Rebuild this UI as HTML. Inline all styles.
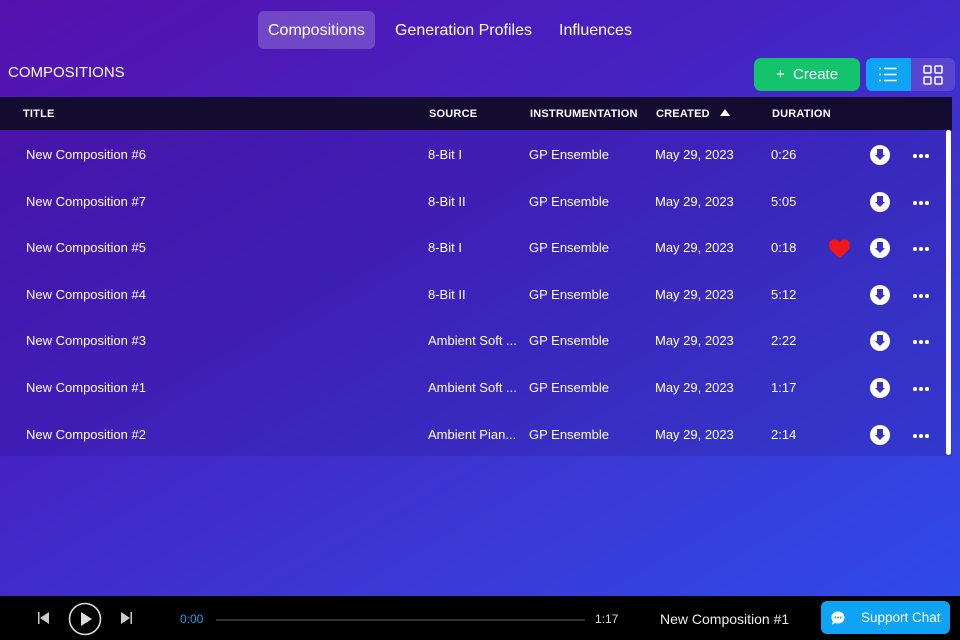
<!DOCTYPE html>
<html><head><style>
*{margin:0;padding:0;box-sizing:border-box}
body{width:960px;height:640px;overflow:hidden;font-family:"Liberation Sans",sans-serif;color:#fff;position:relative;background:linear-gradient(150deg,#5511ae 0%,#4424c4 40%,#3a3ad6 70%,#2d4ced 100%)}
.abs{position:absolute}
.tab{position:absolute;top:11px;height:38px;line-height:40px;font-size:16px;padding:0 10px}
.hdr{position:absolute;top:97px;left:0;width:952px;height:33px;background:#130c30;font-size:11px;font-weight:bold;letter-spacing:.2px}
.hdr span{position:absolute;top:11px}
.body{position:absolute;top:130px;left:0;width:952px;height:326px;background:rgba(40,10,120,.18)}
.row{position:absolute;left:0;width:952px;height:20px;font-size:13px}
.row span{position:absolute;top:1px}
.dl{position:absolute;left:870px;top:-1px;width:20px;height:20px;border-radius:50%;background:#fff}
.dl:after{content:"";position:absolute;left:7px;top:4px;width:6px;height:6px;background:#3a2fc0}
.dl:before{content:"";position:absolute;left:5px;top:10px;border-left:5px solid transparent;border-right:5px solid transparent;border-top:5px solid #3a2fc0}
.dots{position:absolute;left:913px;top:8px}
.dots i{display:inline-block;width:3.6px;height:3.6px;border-radius:50%;background:#fff;margin-right:2.6px;float:left}
</style></head><body>
<div class="tab" style="left:258px;background:rgba(255,255,255,.2);border-radius:6px">Compositions</div>
<div class="tab" style="left:385px">Generation Profiles</div>
<div class="tab" style="left:549px">Influences</div>
<div class="abs" style="left:8px;top:64px;font-size:15px">COMPOSITIONS</div>
<div class="abs" style="left:754px;top:58px;width:106px;height:33px;background:#14c46c;border-radius:7px;font-size:15px;line-height:33px;text-align:center">+&nbsp;&nbsp;Create</div>
<div class="abs" style="left:866px;top:58px;width:89px;height:33px;background:#5a45d0;border-radius:6px;overflow:hidden">
 <div style="width:45px;height:33px;background:#0fa3f5;position:relative">
  <svg width="45" height="33"><g stroke="#fff" stroke-width="1.6"><line x1="13" y1="10.5" x2="15" y2="10.5"/><line x1="18" y1="10.5" x2="31" y2="10.5"/><line x1="13" y1="16.5" x2="15" y2="16.5"/><line x1="18" y1="16.5" x2="31" y2="16.5"/><line x1="13" y1="22.5" x2="15" y2="22.5"/><line x1="18" y1="22.5" x2="31" y2="22.5"/></g></svg>
 </div>
 <svg class="abs" style="left:45px;top:0" width="44" height="33"><g fill="none" stroke="#fff" stroke-width="1.5"><rect x="13" y="8" width="7" height="7" rx="1"/><rect x="24" y="8" width="7" height="7" rx="1"/><rect x="13" y="19" width="7" height="7" rx="1"/><rect x="24" y="19" width="7" height="7" rx="1"/></g></svg>
</div>
<div class="hdr"><span style="left:23px">TITLE</span><span style="left:429px">SOURCE</span><span style="left:530px">INSTRUMENTATION</span><span style="left:656px">CREATED&nbsp;&nbsp;&nbsp;<b style="display:inline-block;border-left:5px solid transparent;border-right:5px solid transparent;border-bottom:7px solid #fff;vertical-align:1px"></b></span><span style="left:772px">DURATION</span></div>
<div class="body"></div>
<div class="abs" style="left:946px;top:130px;width:5px;height:325px;background:#fff;border-radius:3px"></div>
<div class="row" style="top:146px"><span style="left:26px">New Composition #6</span><span style="left:428px">8-Bit I</span><span style="left:529px">GP Ensemble</span><span style="left:655px">May 29, 2023</span><span style="left:771px">0:26</span><div class="dl"></div><div class="dots"><i></i><i></i><i></i></div></div>
<div class="row" style="top:193px"><span style="left:26px">New Composition #7</span><span style="left:428px">8-Bit II</span><span style="left:529px">GP Ensemble</span><span style="left:655px">May 29, 2023</span><span style="left:771px">5:05</span><div class="dl"></div><div class="dots"><i></i><i></i><i></i></div></div>
<div class="row" style="top:239px"><span style="left:26px">New Composition #5</span><span style="left:428px">8-Bit I</span><span style="left:529px">GP Ensemble</span><span style="left:655px">May 29, 2023</span><span style="left:771px">0:18</span>
<svg class="abs" style="left:828px;top:0" width="23" height="20"><path d="M11.5 19 C4 13 1 10 1 6 C1 2.5 3.5 0.5 6.5 0.5 C9 0.5 10.5 2 11.5 3.5 C12.5 2 14 0.5 16.5 0.5 C19.5 0.5 22 2.5 22 6 C22 10 19 13 11.5 19Z" fill="#f01818"/></svg>
<div class="dl"></div><div class="dots"><i></i><i></i><i></i></div></div>
<div class="row" style="top:286px"><span style="left:26px">New Composition #4</span><span style="left:428px">8-Bit II</span><span style="left:529px">GP Ensemble</span><span style="left:655px">May 29, 2023</span><span style="left:771px">5:12</span><div class="dl"></div><div class="dots"><i></i><i></i><i></i></div></div>
<div class="row" style="top:332px"><span style="left:26px">New Composition #3</span><span style="left:428px">Ambient Soft ...</span><span style="left:529px">GP Ensemble</span><span style="left:655px">May 29, 2023</span><span style="left:771px">2:22</span><div class="dl"></div><div class="dots"><i></i><i></i><i></i></div></div>
<div class="row" style="top:379px"><span style="left:26px">New Composition #1</span><span style="left:428px">Ambient Soft ...</span><span style="left:529px">GP Ensemble</span><span style="left:655px">May 29, 2023</span><span style="left:771px">1:17</span><div class="dl"></div><div class="dots"><i></i><i></i><i></i></div></div>
<div class="row" style="top:426px"><span style="left:26px">New Composition #2</span><span style="left:428px">Ambient Pian...</span><span style="left:529px">GP Ensemble</span><span style="left:655px">May 29, 2023</span><span style="left:771px">2:14</span><div class="dl"></div><div class="dots"><i></i><i></i><i></i></div></div>

<div class="abs" style="left:0;top:596px;width:960px;height:44px;background:#000">
 <svg class="abs" style="left:36px;top:14px" width="16" height="16"><rect x="2" y="2" width="1.5" height="12" fill="#ccc"/><path d="M13 2 L4 8 L13 14Z" fill="#ccc"/></svg>
 <svg class="abs" style="left:68px;top:6px" width="34" height="34"><circle cx="17" cy="17" r="15.5" fill="none" stroke="#ddd" stroke-width="1.6"/><path d="M13 10 L24 17 L13 24Z" fill="#ddd"/></svg>
 <svg class="abs" style="left:118px;top:14px" width="16" height="16"><path d="M3 2 L12 8 L3 14Z" fill="#ccc"/><rect x="12.5" y="2" width="1.5" height="12" fill="#ccc"/></svg>
 <div class="abs" style="left:180px;top:16px;font-size:12px;color:#14a0e8">0:00</div>
 <div class="abs" style="left:216px;top:23px;width:369px;height:2px;background:#333"></div>
 <div class="abs" style="left:595px;top:16px;font-size:12px;color:#ddd">1:17</div>
 <div class="abs" style="left:660px;top:15px;font-size:14px;color:#eee">New Composition #1</div>
 <div class="abs" style="left:821px;top:5px;width:129px;height:33px;background:#0fa3f5;border-radius:6px;font-size:13.5px;line-height:33px">
  <svg class="abs" style="left:9px;top:9px" width="16" height="16"><path d="M8 1.5 C12 1.5 14.5 4 14.5 7.5 C14.5 11 12 13.5 8 13.5 C7 13.5 6 13.3 5.2 13 L2 14.5 L2.8 11.5 C1.9 10.4 1.5 9 1.5 7.5 C1.5 4 4 1.5 8 1.5Z" fill="#fff"/><circle cx="5.3" cy="7.5" r="1" fill="#0fa3f5"/><circle cx="8" cy="7.5" r="1" fill="#0fa3f5"/><circle cx="10.7" cy="7.5" r="1" fill="#0fa3f5"/></svg>
  <span style="position:absolute;left:40px">Support Chat</span>
 </div>
</div>
</body></html>
